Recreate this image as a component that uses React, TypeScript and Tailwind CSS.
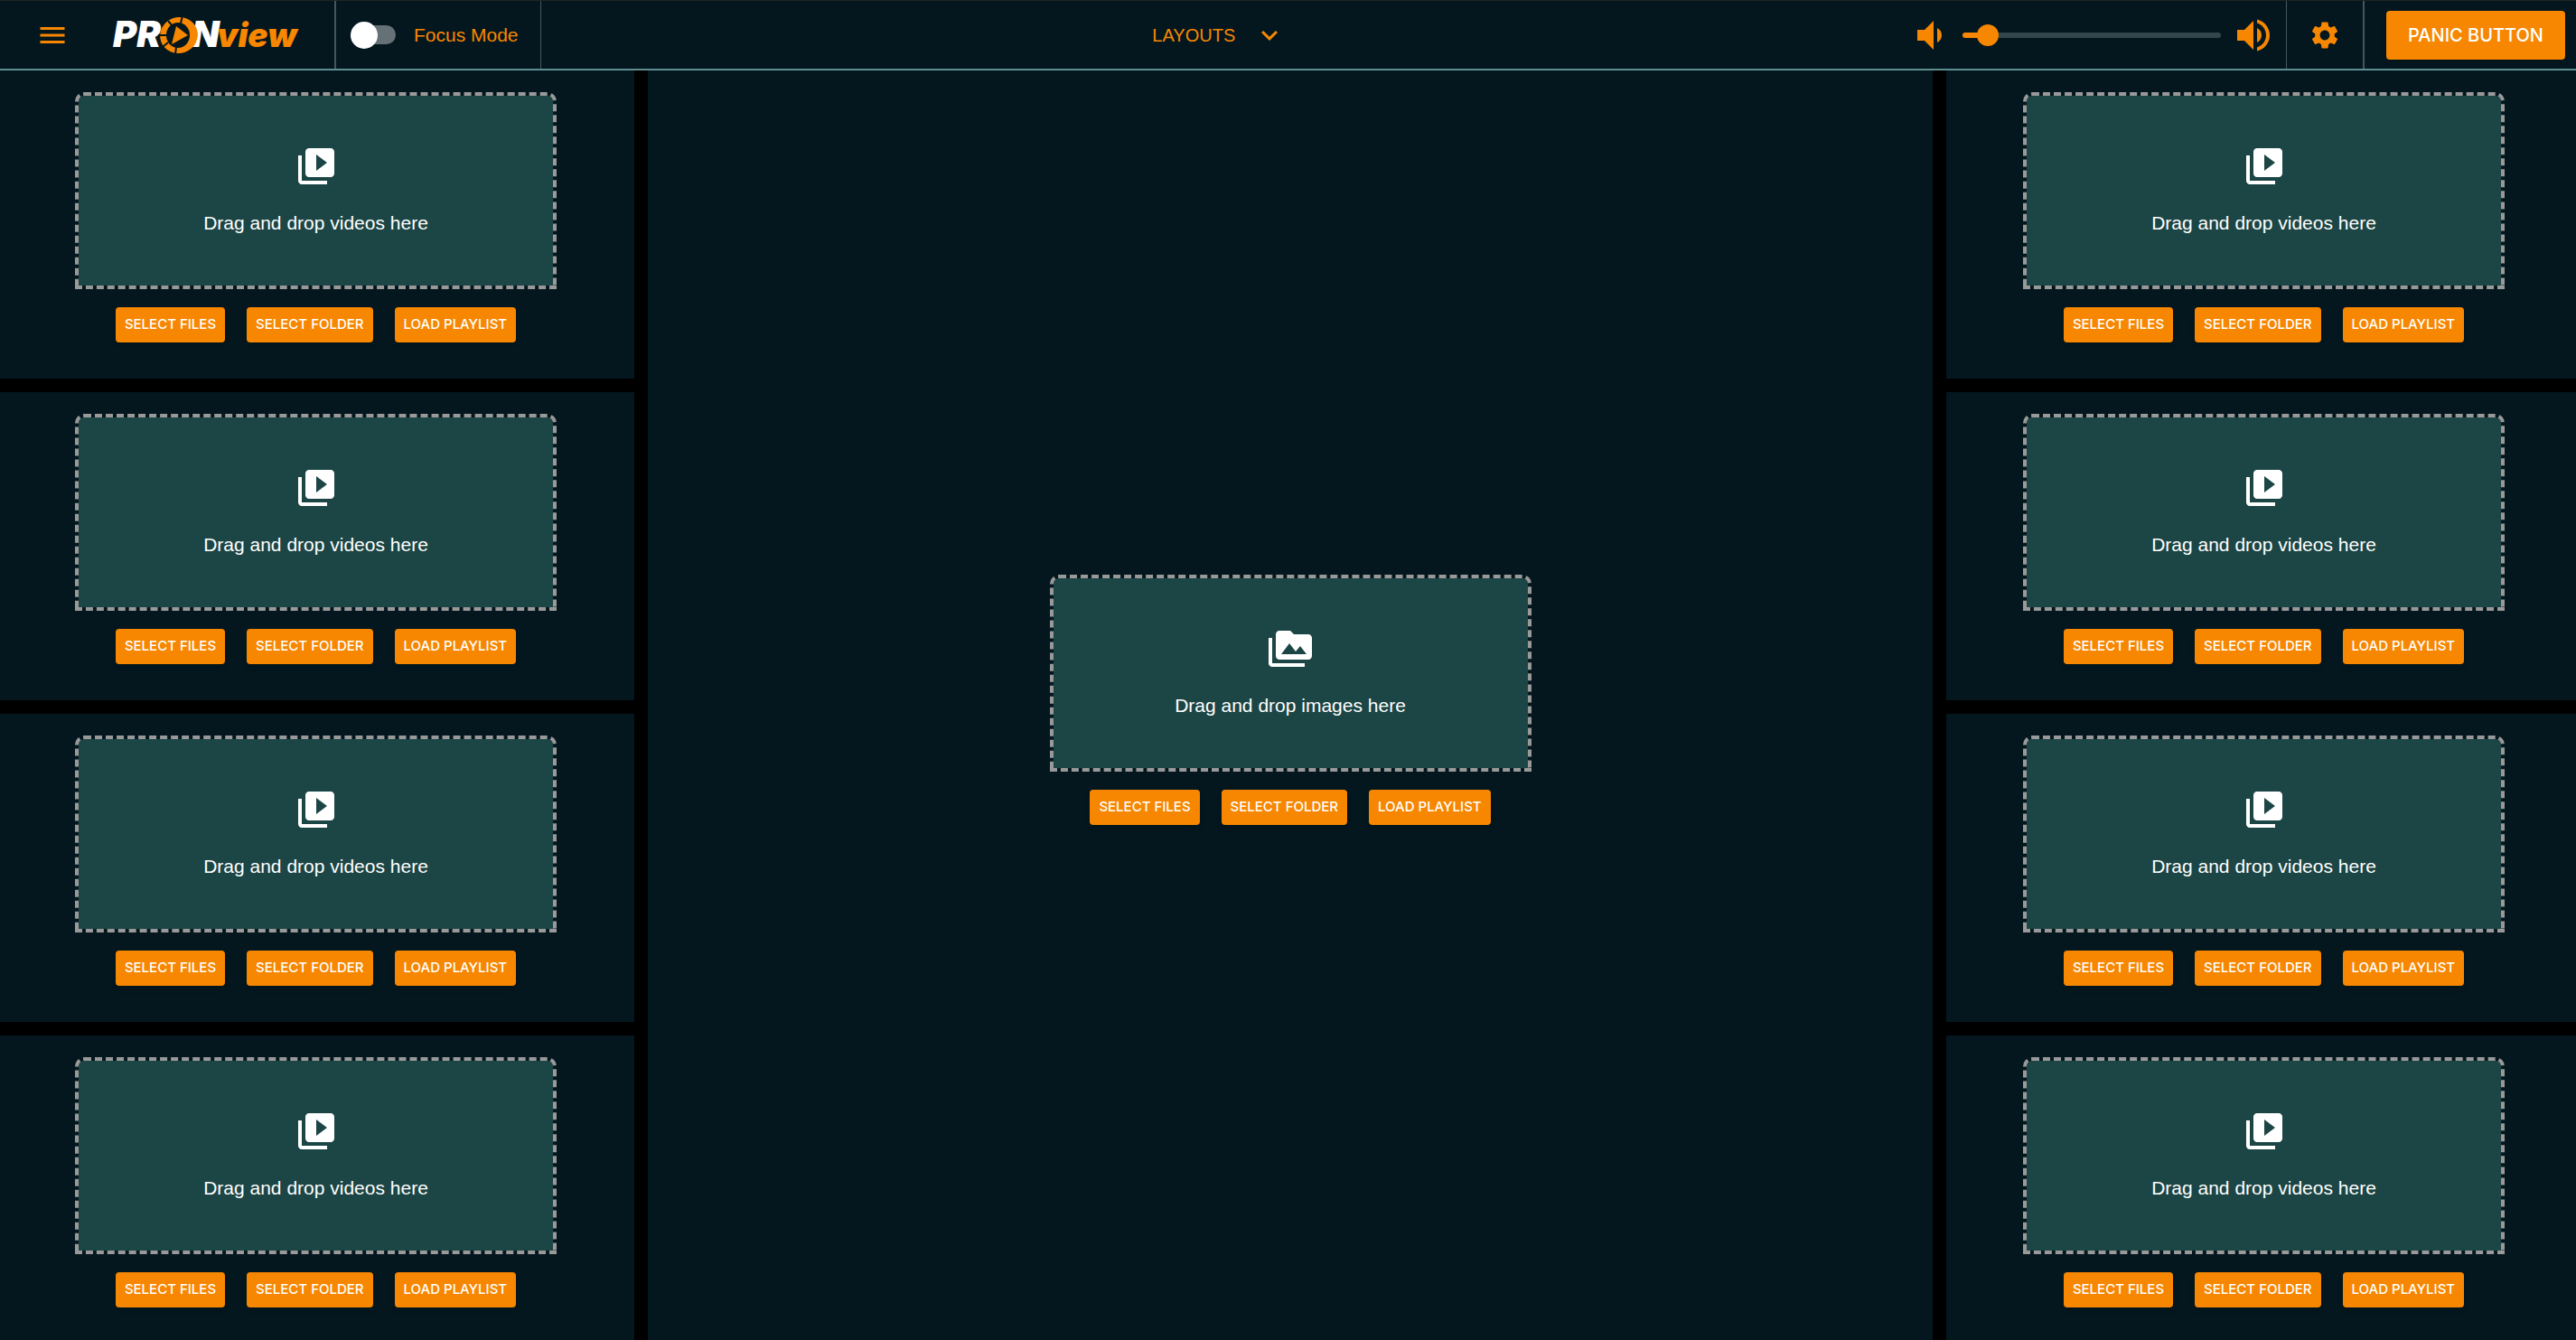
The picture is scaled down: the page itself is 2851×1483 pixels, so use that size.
import React, { useState } from "react";
import {
  MdExpandMore,
  MdMenu,
  MdPermMedia,
  MdSettings,
  MdVideoLibrary,
  MdVolumeDown,
  MdVolumeUp,
} from "react-icons/md";

function Logo() {
  return (
    <svg viewBox="0 0 216 56" className="h-14 w-[216px] shrink-0" role="img" aria-label="PRONview">
      <g fontFamily="Inter, sans-serif" fontStyle="italic" fontWeight="900">
        <text x="3" y="41" fontSize="40" fill="#fff">PR</text>
        <text x="90" y="41" fontSize="40" fill="#fff">N</text>
        <text x="118" y="41" fontSize="37" fill="#f78700">view</text>
      </g>
      <ellipse cx="76" cy="28" rx="21" ry="20" fill="#f78700" transform="rotate(-20 76 28)" />
      <ellipse cx="75" cy="28" rx="13" ry="14" fill="#04171f" />
      <path d="M73 18 L86 28 L68 38 Z" fill="#f78700" />
      <path
        d="M80 6 L78 15 M64 12 L69 18 M53 28 L63 28 M58 41 L64 36 M72 49 L73 41"
        stroke="#04171f"
        strokeWidth="2"
      />
    </svg>
  );
}

function ActionButton({ label }: { label: string }) {
  return (
    <button
      type="button"
      className="h-[39px] rounded-[4px] bg-[#f78700] px-2.5 font-['Inter',sans-serif] text-[15px] font-medium text-white shadow-md"
    >
      {label}
    </button>
  );
}

function DropZone({ kind }: { kind: "videos" | "images" }) {
  const Icon = kind === "videos" ? MdVideoLibrary : MdPermMedia;
  return (
    <div className="flex flex-col items-center gap-5">
      <div className="flex h-[218px] w-[533px] flex-col items-center justify-center gap-6 rounded-t-[10px] border-4 border-dashed border-[#999] bg-[#1c4645] bg-clip-padding text-white">
        <Icon className="size-12" aria-hidden />
        <p className="text-[21px] leading-[30px]">Drag and drop {kind} here</p>
      </div>
      <div className="flex gap-6">
        <ActionButton label="SELECT FILES" />
        <ActionButton label="SELECT FOLDER" />
        <ActionButton label="LOAD PLAYLIST" />
      </div>
    </div>
  );
}

function VideoColumn({ name, inset }: { name: string; inset: string }) {
  return (
    <section aria-label={name} className="flex flex-col gap-[15px]">
      {[1, 2, 3, 4].map((n) => (
        <div key={n} className={`flex justify-center bg-[#04171f] pt-6 pb-10 ${inset}`}>
          <DropZone kind="videos" />
        </div>
      ))}
    </section>
  );
}

function Header() {
  const [focus, setFocus] = useState(false);
  const [volume, setVolume] = useState(6);
  return (
    <header className="flex h-[78px] shrink-0 items-stretch border-t border-b-2 border-t-[#222] border-b-[#5f8f92] bg-[#04171f]">
      <div className="flex items-center gap-[46px] border-r-2 border-[#46555b] pr-8 pl-10">
        <button type="button" aria-label="Menu">
          <MdMenu className="size-9" />
        </button>
        <Logo />
      </div>

      <label className="flex items-center gap-5 border-r border-[#46555b] pr-6 pl-4 text-[21px]">
        <span className="relative flex h-[30px] w-[50px] items-center">
          <input
            type="checkbox"
            role="switch"
            checked={focus}
            onChange={(e) => setFocus(e.target.checked)}
            className="peer ml-1 h-[21px] w-full appearance-none rounded-full bg-[#667177]"
          />
          <span className="pointer-events-none absolute left-0 size-[30px] rounded-full bg-white peer-checked:left-5" />
        </span>
        Focus Mode
      </label>

      <div className="flex grow items-center justify-center">
        <button type="button" className="flex items-center gap-5 text-xl">
          LAYOUTS
          <MdExpandMore className="size-9" aria-hidden />
        </button>
      </div>

      <div className="flex items-center gap-3 border-r border-[#46555b] px-3">
        <MdVolumeDown className="size-12" aria-hidden />
        <input
          type="range"
          aria-label="Volume"
          min={0}
          max={100}
          value={volume}
          onChange={(e) => setVolume(Number(e.target.value))}
          style={{ "--fill": `${volume}%` } as React.CSSProperties}
          className="h-1.5 w-[286px] appearance-none rounded-full bg-[linear-gradient(to_right,#f78700_var(--fill),#34464b_var(--fill))] [&::-webkit-slider-thumb]:size-6 [&::-webkit-slider-thumb]:appearance-none [&::-webkit-slider-thumb]:rounded-full [&::-webkit-slider-thumb]:bg-[#f78700]"
        />
        <MdVolumeUp className="size-12" aria-hidden />
      </div>

      <button type="button" aria-label="Settings" className="border-r-2 border-[#46555b] px-6">
        <MdSettings className="size-9" />
      </button>

      <div className="flex items-center pr-3 pl-6">
        <button
          type="button"
          className="h-[54px] rounded-[4px] bg-[#f78700] px-6 font-['Inter',sans-serif] text-xl font-medium text-white shadow-md"
        >
          PANIC BUTTON
        </button>
      </div>
    </header>
  );
}

export default function App() {
  return (
    <div className="flex h-screen flex-col overflow-hidden bg-black font-['Liberation_Sans',sans-serif] text-[#f78700]">
      <Header />
      <main className="grid min-h-0 grow grid-cols-[702fr_1422fr_697fr] gap-[15px]">
        <VideoColumn name="Left videos" inset="pr-[3px]" />
        <section aria-label="Images" className="flex items-center justify-center bg-[#04171f] pb-4">
          <DropZone kind="images" />
        </section>
        <VideoColumn name="Right videos" inset="pl-1.5" />
      </main>
    </div>
  );
}
